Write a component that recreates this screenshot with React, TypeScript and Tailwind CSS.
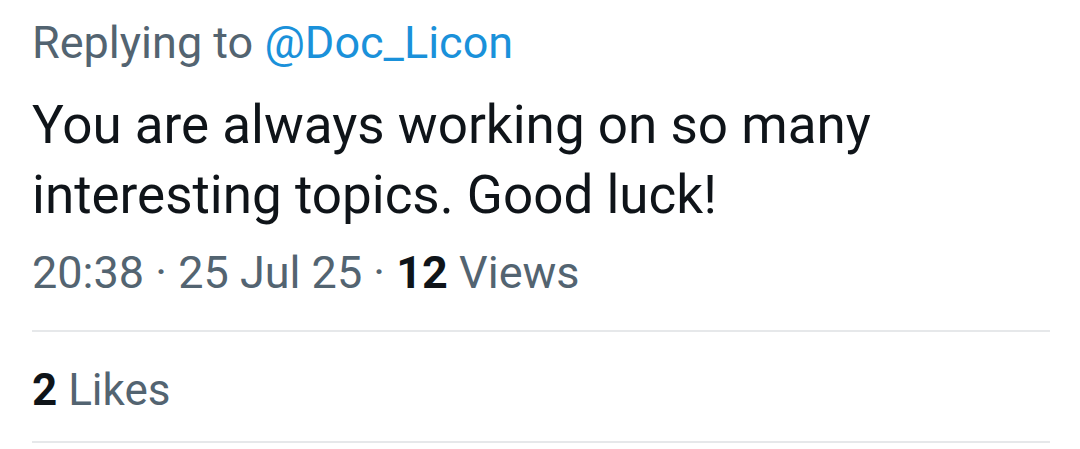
const App = () => {
  return (
    <div className="w-[1080px] h-[449px] bg-white overflow-hidden font-['Roboto',sans-serif]">
      <div className="pl-[32px] pr-[30px]">
        <p className="pt-[15px] text-[45px] leading-[56px] text-[#536471]">
          Replying to <span className="text-[#1a91da]">@Doc_Licon</span>
        </p>
        <p className="mt-[19px] text-[53px] leading-[70px] text-[#0f1419]">
          You are always working on so many
          <br />
          interesting topics. Good luck!
        </p>
        <p className="mt-[15px] text-[45px] leading-[56px] text-[#536471]">
          20:38 · 25 Jul 25 ·{' '}
          <span className="font-bold text-[#0f1419]">12</span> Views
        </p>
        <div className="mt-[29px] border-t-2 border-[#e6e8ea]" />
        <p className="pt-[30px] pb-[23px] text-[44px] leading-[56px] text-[#536471]">
          <span className="font-bold text-[#0f1419]">2</span> Likes
        </p>
        <div className="border-t-2 border-[#e6e8ea]" />
      </div>
    </div>
  );
};

export default App;
